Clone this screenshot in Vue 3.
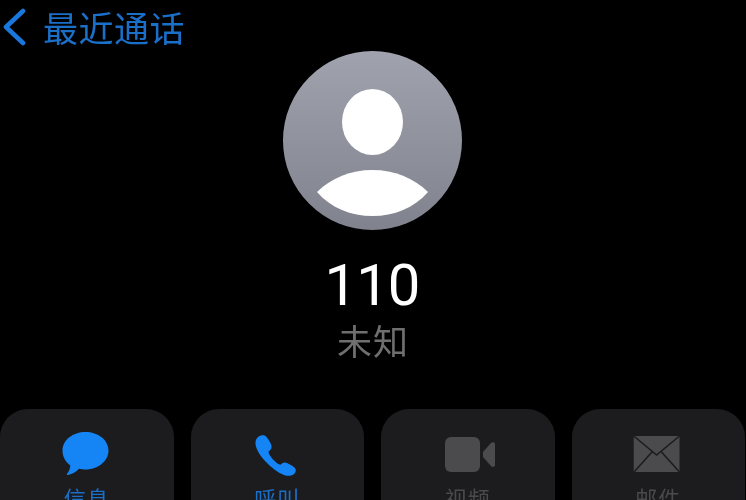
<script setup>
const actions = [
  { key: 'message', label: '信息', active: true },
  { key: 'call', label: '呼叫', active: true },
  { key: 'video', label: '视频', active: false },
  { key: 'mail', label: '邮件', active: false },
]
</script>

<template>
  <div class="screen">
    <header class="nav">
      <svg class="back" width="24" height="38" viewBox="0 0 24 38" aria-hidden="true">
        <path d="M21 3 L4 19 L21 35" fill="none" stroke="#1a78dc" stroke-width="4.6" stroke-linecap="round" stroke-linejoin="round" />
      </svg>
      <span class="back-label">最近通话</span>
    </header>

    <div class="contact">
      <svg class="avatar" width="179" height="179" viewBox="0 0 179 179" aria-hidden="true">
        <defs>
          <linearGradient id="avatarFill" x1="0" y1="0" x2="0" y2="1">
            <stop offset="0" stop-color="#a0a3ad" />
            <stop offset="1" stop-color="#80838e" />
          </linearGradient>
        </defs>
        <circle cx="89.5" cy="89.5" r="89.5" fill="url(#avatarFill)" />
        <ellipse cx="89.5" cy="71" rx="30.5" ry="33" fill="#fff" />
        <path d="M34 141 C48 127 68 119 89.5 119 C111 119 131 127 145 141 C131 157 111 165 89.5 165 C68 165 48 157 34 141 Z" fill="#fff" />
      </svg>
      <div class="number">110</div>
      <div class="status">未知</div>
    </div>

    <div class="actions">
      <div v-for="a in actions" :key="a.key" class="action" :class="{ active: a.active }">
        <svg class="icon" width="60" height="46" viewBox="0 0 60 46" aria-hidden="true">
          <path v-if="a.key === 'message'" d="M28.5 1 C41 1 51.5 9 51.5 19.5 C51.5 30 41 38.5 28.5 38.5 C26 38.5 24 38.2 22 37.7 C19 41 15.5 43 11 44 C10 44.2 9.5 43.3 10.2 42.5 C12 40.5 13 38 13.3 34.5 C8.5 31 5.5 25.5 5.5 19.5 C5.5 9 16 1 28.5 1 Z" fill="#1585f5" />
          <path v-else-if="a.key === 'call'" d="M11 6 C13.5 4 17.5 3.8 19 5.5 C21 7.5 24 12 24.5 15 C24.8 17.2 24 18.5 22.500 19.700 L21.500 20.500 C21.500 22.500 23.500 25.500 26 28.500 C29 31.500 31.500 33.500 33.500 33.800 L35 32.500 C36.500 31.300 38 31 40 32 C43 33.300 47 35.500 48.300 37.500 C49.500 39.500 48.500 42 46.500 43.500 C44 45.200 40.500 45.200 37 44 C30.500 41.500 24 36.500 18.500 30.500 C13 24.500 9 18 8.500 13 C8.300 10 9 7.700 11 6 Z" fill="#1585f5" />
          <g v-else-if="a.key === 'video'" fill="#4b4b4d">
            <rect x="7" y="6" width="35" height="35" rx="6" />
            <path d="M45 21 L53 12 C54.5 10.5 57 11 57 13 L57 34 C57 36 54.5 36.5 53 35 L45 26 Z" />
          </g>
          <g v-else>
            <rect x="5.75" y="5" width="45.75" height="36" fill="#4b4b4d" />
            <path d="M5.75 5 L28.6 24 L51.5 5 M6 41 L24 21 M51.5 41 L33.5 21" fill="none" stroke="#1c1c1e" stroke-width="1.6" />
          </g>
        </svg>
        <span class="label">{{ a.label }}</span>
      </div>
    </div>
  </div>
</template>

<style scoped>
.screen {
  height: 500px;
  overflow: hidden;
  background: #000;
  font-family: "Noto Sans CJK SC", "Liberation Sans", sans-serif;
  filter: blur(0.6px);
}

.nav {
  display: flex;
  align-items: center;
  gap: 17px;
  height: 54px;
  padding-left: 2px;
}

.back-label {
  color: #1a6fc9;
  font-size: 35px;
  line-height: 54px;
  letter-spacing: 0.5px;
}

.contact {
  display: flex;
  flex-direction: column;
  align-items: center;
  padding-right: 2px;
}

.avatar {
  margin-top: -3px;
  display: block;
}

.number {
  margin-top: 20px;
  color: #fff;
  font-family: Roboto, "Liberation Sans", sans-serif;
  font-weight: 400;
  font-size: 58px;
  line-height: 70px;
  letter-spacing: -1px;
}

.status {
  color: #6f6f6f;
  font-size: 35px;
  line-height: 44px;
  letter-spacing: 1px;
  margin-top: -2px;
  padding-left: 2px;
}

.actions {
  display: grid;
  grid-template-columns: repeat(4, 173.5px);
  gap: 17px;
  margin-top: 47px;
}

.action {
  height: 120px;
  border-radius: 28px;
  background: #1c1c1e;
  display: flex;
  flex-direction: column;
  align-items: center;
  padding-top: 22px;
  box-sizing: border-box;
  color: #4a4a4c;
}

.action.active {
  color: #1a6fc9;
}

.icon {
  display: block;
}

.label {
  margin-top: 5px;
  font-size: 22px;
  line-height: 30px;
  letter-spacing: 1px;
}
</style>
